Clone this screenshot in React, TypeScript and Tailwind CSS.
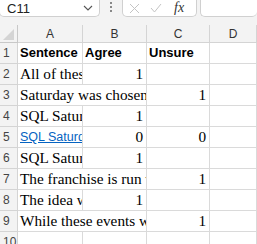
import React from "react";

type Row = {
  n: number;
  a?: string;
  b?: string;
  c?: string;
  span?: boolean;
  kind?: "head" | "serif" | "link";
};

const rows: Row[] = [
  { n: 1, a: "Sentence", b: "Agree", c: "Unsure", kind: "head" },
  { n: 2, a: "All of these events", b: "1", kind: "serif" },
  { n: 3, a: "Saturday was chosen as", c: "1", span: true, kind: "serif" },
  { n: 4, a: "SQL Saturday", b: "1", kind: "serif" },
  { n: 5, a: "SQL Saturday", b: "0", c: "0", kind: "link" },
  { n: 6, a: "SQL Saturday", b: "1", kind: "serif" },
  { n: 7, a: "The franchise is run with", c: "1", span: true, kind: "serif" },
  { n: 8, a: "The idea was", b: "1", kind: "serif" },
  { n: 9, a: "While these events were", c: "1", span: true, kind: "serif" },
  { n: 10 },
];

const cell = "h-[21px] border-r border-b border-[#dadada] bg-white overflow-hidden whitespace-nowrap";
const serif = { fontFamily: '"Liberation Serif", serif' };
const sans = { fontFamily: '"Liberation Sans", Arial, sans-serif' };

function textCls(kind?: Row["kind"]) {
  if (kind === "head") return "text-[13px] font-bold text-black leading-[20px]";
  if (kind === "link") return "text-[12.5px] text-[#0563c1] underline leading-[20px]";
  return "text-[15.25px] text-black leading-[20px]";
}

export default function App() {
  return (
    <div className="w-[257px] h-[244px] overflow-hidden bg-[#f3f3f3]" style={sans}>
      <div className="flex h-[17px] items-stretch">
        <div className="w-[101px] -ml-[1px] flex items-center justify-between rounded-b-[5px] border border-t-0 border-[#d0d0d0] bg-white pl-[7px] pr-[6px]">
          <span className="text-[13px] text-[#222] leading-none">C11</span>
          <svg width="10" height="6" viewBox="0 0 10 6">
            <path d="M1 1 L5 5 L9 1" fill="none" stroke="#555" strokeWidth="1.1" />
          </svg>
        </div>
        <div className="w-[22px] flex flex-col items-center justify-center gap-[2px] pb-[3px]">
          <span className="w-[2px] h-[2px] bg-[#888]" />
          <span className="w-[2px] h-[2px] bg-[#888]" />
          <span className="w-[2px] h-[2px] bg-[#888]" />
        </div>
        <div className="w-[75px] flex items-center rounded-b-[5px] border border-t-0 border-[#d0d0d0] bg-white pl-[6px] gap-[10px]">
          <svg width="11" height="11" viewBox="0 0 11 11">
            <path d="M1 1 L10 10 M10 1 L1 10" stroke="#c4c4c4" strokeWidth="1" />
          </svg>
          <svg width="12" height="10" viewBox="0 0 12 10">
            <path d="M1 5 L4.5 9 L11 1" fill="none" stroke="#c4c4c4" strokeWidth="1" />
          </svg>
          <span className="ml-[2px] text-[14px] italic text-[#333] leading-none" style={serif}>
            fx
          </span>
        </div>
        <div className="ml-[3px] flex-1 rounded-b-[5px] border border-t-0 border-r-0 border-[#d0d0d0] bg-white" />
      </div>

      <div className="mt-[8px] grid grid-cols-[18px_65px_64px_63px_1fr]">
        <div className="h-[18px] border-r border-b border-[#c8c8c8] bg-[#f3f3f3] flex items-end justify-end pr-[3px] pb-[2px]">
          <svg width="11" height="11" viewBox="0 0 11 11">
            <path d="M11 0 L11 11 L0 11 Z" fill="#d4d4d4" />
          </svg>
        </div>
        {["A", "B", "C", "D"].map((h) => (
          <div
            key={h}
            className="h-[18px] border-r border-b border-[#d4d4d4] bg-[#f3f3f3] text-center text-[12px] text-[#333] leading-[18px]"
          >
            {h}
          </div>
        ))}

        {rows.map((r) => {
          const style = r.kind === "link" || r.kind === "head" ? sans : serif;
          const head = r.kind === "head";
          const numCls = `${cell} ${head ? "pl-[2px] text-left" : "pr-[3px] text-right"} ${textCls(head ? "head" : "serif")}`;
          return (
            <React.Fragment key={r.n}>
              <div className="h-[21px] border-r border-b border-[#d4d4d4] bg-[#f3f3f3] pl-[3px] text-[12px] text-[#444] leading-[21px]">
                {r.n}
              </div>
              {r.span ? (
                <div className={`${cell} col-span-2 pl-[2px] ${textCls(r.kind)}`} style={style}>
                  {r.a}
                </div>
              ) : (
                <>
                  <div className={`${cell} pl-[2px] ${textCls(r.kind)}`} style={style}>
                    {r.a}
                  </div>
                  <div className={numCls} style={head ? sans : serif}>
                    {r.b}
                  </div>
                </>
              )}
              <div className={numCls} style={head ? sans : serif}>
                {r.c}
              </div>
              <div className={cell} />
            </React.Fragment>
          );
        })}
      </div>
    </div>
  );
}
